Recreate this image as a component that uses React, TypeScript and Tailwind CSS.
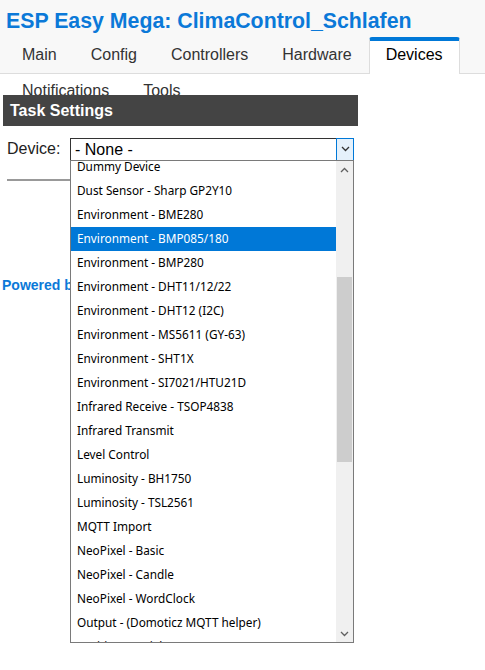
import React from 'react';

const devices = [
  'Dummy Device',
  'Dust Sensor - Sharp GP2Y10',
  'Environment - BME280',
  'Environment - BMP085/180',
  'Environment - BMP280',
  'Environment - DHT11/12/22',
  'Environment - DHT12 (I2C)',
  'Environment - MS5611 (GY-63)',
  'Environment - SHT1X',
  'Environment - SI7021/HTU21D',
  'Infrared Receive - TSOP4838',
  'Infrared Transmit',
  'Level Control',
  'Luminosity - BH1750',
  'Luminosity - TSL2561',
  'MQTT Import',
  'NeoPixel - Basic',
  'NeoPixel - Candle',
  'NeoPixel - WordClock',
  'Output - (Domoticz MQTT helper)',
  'Position - Serial GPS',
];

const tabs = ['Main', 'Config', 'Controllers', 'Hardware'];

function Chevron({ up = false, className = '' }: { up?: boolean; className?: string }) {
  return (
    <svg width="9" height="6" viewBox="0 0 9 6" className={className}>
      <path
        d={up ? 'M1 5 L4.5 1.5 L8 5' : 'M1 1 L4.5 4.5 L8 1'}
        fill="none"
        stroke="currentColor"
        strokeWidth="1.3"
      />
    </svg>
  );
}

export default function App() {
  return (
    <div className="relative w-[485px] h-[670px] overflow-hidden bg-white font-['Liberation_Sans',Arial,sans-serif] text-black">
      {/* Header */}
      <div className="bg-[#f8f8f8] border-b border-[#dddddd]">
        <h1 className="pl-[6px] pt-[9px] pb-[4px] text-[21.3px] leading-[24px] font-bold text-[#0b79d8]">
          ESP Easy Mega: ClimaControl_Schlafen
        </h1>
        <div className="flex pl-[5px] h-[36px] text-[16px] text-[#333]">
          {tabs.map((t) => (
            <div key={t} className="flex items-center px-[17px] h-full">
              {t}
            </div>
          ))}
          <div className="flex items-center px-[16px] pb-[5px] h-[37px] -mb-px bg-white border-t-4 border-t-[#0078d7] border-x border-x-[#dddddd] rounded-t-[3px] text-black">
            Devices
          </div>
        </div>
      </div>
      <div className="flex pl-[5px] h-[21px] overflow-hidden text-[16px] text-[#333]">
        <div className="px-[17px] pt-[8px] leading-[18px]">Notifications</div>
        <div className="px-[17px] pt-[8px] leading-[18px]">Tools</div>
      </div>

      {/* Task settings */}
      <div className="ml-[3px] w-[355px] h-[31px] bg-[#444444] flex items-center pl-[7px] text-white font-bold text-[16px]">
        Task Settings
      </div>
      <div className="flex items-center mt-[11px] pl-[7px]">
        <span className="w-[63px] text-[16px] text-[#222]">Device:</span>
        <div className="flex w-[284px] h-[23px] border border-[#333] border-r-0 bg-white">
          <span className="flex-1 pl-[4px] text-[16px] leading-[21px]">- None -</span>
          <div className="w-[18px] h-[23px] -mt-px flex items-center justify-center bg-[#e5f1fb] border border-[#0078d7] text-[#333]">
            <Chevron />
          </div>
        </div>
      </div>
      <div className="ml-[7px] mt-[18px] w-[347px] h-[2px] bg-[#999]" />
      <div className="mt-[94px] pl-[2px] text-[14px] font-bold text-[#0b79d8]">
        Powered by Let's Control It community
      </div>

      {/* Open select list */}
      <div className="absolute left-[70px] top-[160px] w-[284px] h-[483px] border border-[#7a7a7a] bg-white flex overflow-hidden">
        <div className="flex-1 overflow-hidden">
          <div className="-mt-[6px] font-['Noto_Sans',sans-serif] text-[11.8px] text-black">
            {devices.map((d, i) => (
              <div
                key={d}
                className={
                  i === 3
                    ? 'h-[24px] flex items-center pl-[6px] bg-[#0078d7] text-white'
                    : 'h-[24px] flex items-center pl-[6px]'
                }
              >
                {d}
              </div>
            ))}
          </div>
        </div>
        <div className="w-[17px] bg-[#f0f0f0] flex flex-col items-center">
          <div className="h-[17px] w-full flex items-center justify-center text-[#606060]">
            <Chevron up />
          </div>
          <div className="flex-1 w-full px-[1px]">
            <div className="mt-[99px] h-[185px] bg-[#cdcdcd]" />
          </div>
          <div className="h-[17px] w-full flex items-center justify-center text-[#606060]">
            <Chevron />
          </div>
        </div>
      </div>
    </div>
  );
}
